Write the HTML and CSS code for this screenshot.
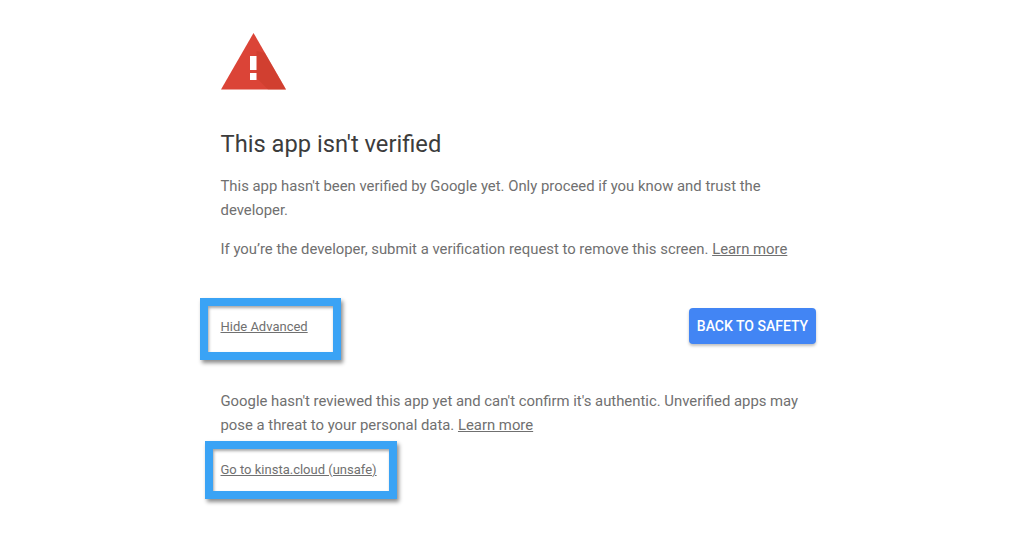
FILE: index.html
```html
<!DOCTYPE html>
<html lang="en">
  <head>
    <meta charset="UTF-8" />
    <title>This app isn't verified</title>
    <link rel="stylesheet" href="styles.css">
  </head>
  <body>
    <div class="warning">
      <svg class="warning-icon" width="65" height="57" viewBox="0 0 65 57">
        <polygon points="32.5,0 65,56.5 0,56.5" fill="#db4437" />
        <polygon points="35.5,18 35.5,45 47,56.5 65,56.5 44,20" fill="#c53929" opacity="0.45" />
        <rect x="29" y="23" width="6.5" height="14" fill="#fff" />
        <rect x="29" y="40" width="6.5" height="7" fill="#fff" />
      </svg>
      <h1>This app isn't verified</h1>
      <p class="first">This app hasn't been verified by Google yet. Only proceed if you know and trust the developer.</p>
      <p class="second">If you’re the developer, submit a verification request to remove this screen. <a href="#">Learn more</a></p>
      <div class="actions">
        <a class="small-link hide-link" href="#">Hide Advanced<span class="callout callout-hide"></span></a>
        <button class="safety-btn">BACK TO SAFETY</button>
      </div>
      <p class="third">Google hasn't reviewed this app yet and can't confirm it's authentic. Unverified apps may pose a threat to your personal data. <a href="#">Learn more</a></p>
      <a class="small-link unsafe" href="#">Go to kinsta.cloud (unsafe)<span class="callout callout-unsafe"></span></a>
    </div>
  </body>
</html>
```

FILE: styles.css
```css
html,
body {
  height: 100%;
}
body {
  margin: 0;
  background: #fff;
  font-family: Roboto, "Liberation Sans", sans-serif;
  color: #707070;
}
.warning {
  width: 595.5px;
  margin-left: 220.5px;
  padding-top: 33px;
}
.warning-icon {
  display: block;
  margin-left: 0.5px;
}
h1 {
  margin: 37px 0 0;
  font-size: 23.7px;
  font-weight: 400;
  line-height: 34px;
  color: #3c3c3c;
}
p {
  margin: 0;
  font-size: 14.87px;
  line-height: 24px;
}
a {
  color: #707070;
}
.first {
  margin-top: 13px;
}
.second {
  margin-top: 15px;
}
.actions {
  display: flex;
  justify-content: space-between;
  align-items: center;
  margin-top: 47px;
}
.small-link {
  position: relative;
  font-size: 13px;
  line-height: 16px;
}
.hide-link {
  padding-top: 2px;
}
.safety-btn {
  width: 127px;
  height: 36px;
  border: none;
  border-radius: 4px;
  background: #4285f4;
  color: #fff;
  font-family: Roboto, "Liberation Sans", sans-serif;
  font-size: 14px;
  font-weight: 500;
  padding: 0;
  box-shadow: 0 2px 3px rgba(0, 0, 0, 0.25);
}
.third {
  margin-top: 45px;
}
.unsafe {
  display: inline-block;
  margin-top: 25px;
}
.callout {
  position: absolute;
  border: 8px solid #3aa3f5;
  box-shadow: 2px 3px 4px rgba(0, 0, 0, 0.45), inset 1px 2px 3px rgba(0, 0, 0, 0.35);
}
.callout-hide {
  left: -20.5px;
  top: -19px;
  width: 125px;
  height: 46px;
}
.callout-unsafe {
  left: -15.5px;
  top: -21px;
  width: 176px;
  height: 42px;
}
```
